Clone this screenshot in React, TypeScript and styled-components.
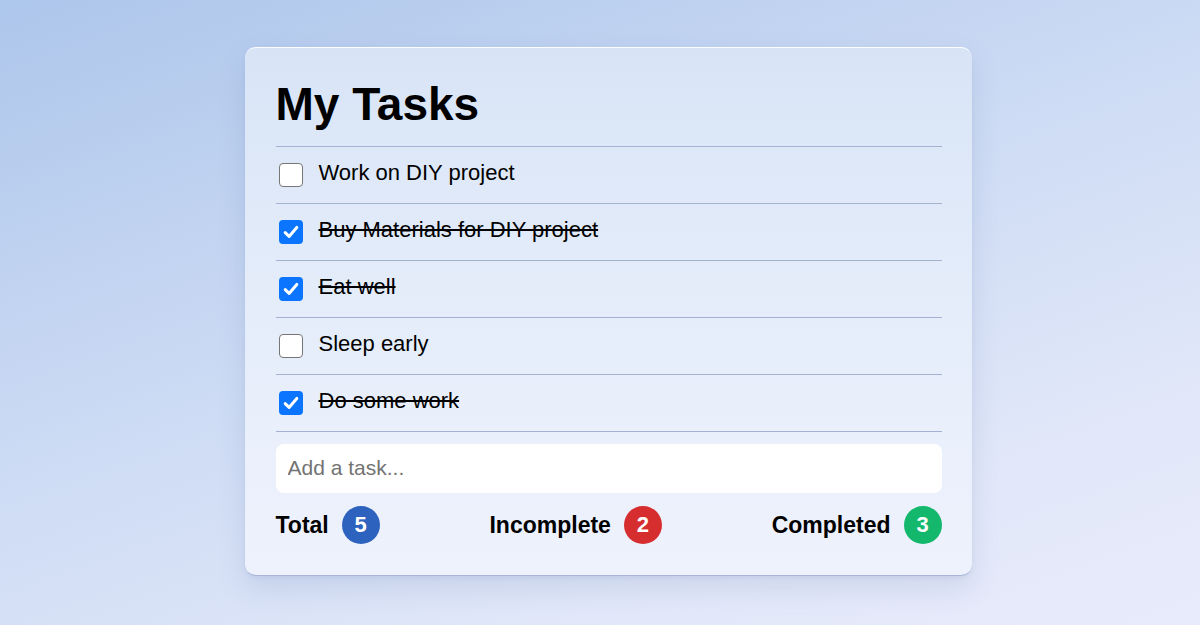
import React from "react";
import styled, { createGlobalStyle } from "styled-components";

const Global = createGlobalStyle`
  html, body { margin: 0; padding: 0; }
  body {
    width: 1200px;
    height: 625px;
    overflow: hidden;
    font-family: "Liberation Sans", Arial, sans-serif;
    background: linear-gradient(160deg, #adc6eb 0%, #cddbf4 45%, #e2e8f9 80%, #e8ebfb 100%);
  }
`;

const Page = styled.div`
  display: flex;
  justify-content: center;
  padding: 47px 0 0 16px;
  height: 625px;
  box-sizing: border-box;
`;

const Card = styled.div`
  width: 727px;
  height: 529px;
  box-sizing: border-box;
  padding: 30px 30px 31px 31px;
  border-radius: 11px;
  background: linear-gradient(180deg, #d8e4f6 0%, #e5edfa 50%, #eef2fd 100%);
  border-top: 1px solid rgba(255, 255, 255, 0.85);
  border-bottom: 1.5px solid #a9b6da;
  box-shadow: 0 12px 28px rgba(90, 110, 170, 0.16), 0 2px 4px rgba(90, 110, 170, 0.08);
  display: flex;
  flex-direction: column;
`;

const Title = styled.h1`
  margin: 0 0 15px;
  font-size: 46px;
  line-height: 53px;
  font-weight: 700;
  color: #000;
`;

const List = styled.ul`
  list-style: none;
  margin: 0;
  padding: 0;
  border-bottom: 1px solid #a3b2d2;
`;

const Row = styled.li`
  display: flex;
  align-items: center;
  gap: 16px;
  height: 56px;
  border-top: 1px solid #a3b2d2;
  padding-left: 3px;
`;

const Box = styled.span<{ $checked: boolean }>`
  width: 24px;
  height: 24px;
  box-sizing: border-box;
  border-radius: 4px;
  flex: none;
  display: flex;
  align-items: center;
  justify-content: center;
  background: ${(p) => (p.$checked ? "#0b75ff" : "#ffffff")};
  border: ${(p) => (p.$checked ? "none" : "1px solid #767676")};
`;

const Label = styled.span<{ $done: boolean }>`
  font-size: 22px;
  color: #000;
  margin-bottom: 5px;
  text-decoration: ${(p) => (p.$done ? "line-through" : "none")};
  text-decoration-thickness: 1.5px;
`;

const Input = styled.input`
  margin-top: 12px;
  height: 49px;
  box-sizing: border-box;
  width: 100%;
  border: none;
  outline: none;
  border-radius: 8px;
  background: #fff;
  padding: 0 12px 2px;
  font-family: "Liberation Sans", Arial, sans-serif;
  font-size: 21px;
  color: #000;
  &::placeholder { color: #737373; }
`;

const Stats = styled.div`
  margin-top: 13px;
  display: flex;
  justify-content: space-between;
  align-items: center;
`;

const Stat = styled.div`
  display: flex;
  align-items: center;
  gap: 13px;
  font-size: 23px;
  font-weight: 700;
  color: #000;
`;

const Badge = styled.span<{ $color: string }>`
  width: 38px;
  height: 38px;
  border-radius: 50%;
  background: ${(p) => p.$color};
  color: #fff;
  display: flex;
  align-items: center;
  justify-content: center;
  font-size: 22px;
  font-weight: 700;
`;

const Check = () => (
  <svg width="18" height="18" viewBox="0 0 18 18">
    <path d="M3.2 9.6 L7.1 13.4 L14.8 4.4" fill="none" stroke="#fff" strokeWidth="3" strokeLinecap="round" strokeLinejoin="round" />
  </svg>
);

const tasks = [
  { text: "Work on DIY project", done: false },
  { text: "Buy Materials for DIY project", done: true },
  { text: "Eat well", done: true },
  { text: "Sleep early", done: false },
  { text: "Do some work", done: true },
];

export default function App() {
  const total = tasks.length;
  const completed = tasks.filter((t) => t.done).length;
  return (
    <>
      <Global />
      <Page>
        <Card>
          <Title>My Tasks</Title>
          <List>
            {tasks.map((t) => (
              <Row key={t.text}>
                <Box $checked={t.done}>{t.done && <Check />}</Box>
                <Label $done={t.done}>{t.text}</Label>
              </Row>
            ))}
          </List>
          <Input placeholder="Add a task..." />
          <Stats>
            <Stat>
              Total <Badge $color="#2e62bf">{total}</Badge>
            </Stat>
            <Stat>
              Incomplete <Badge $color="#d62d2f">{total - completed}</Badge>
            </Stat>
            <Stat>
              Completed <Badge $color="#13b86d">{completed}</Badge>
            </Stat>
          </Stats>
        </Card>
      </Page>
    </>
  );
}
